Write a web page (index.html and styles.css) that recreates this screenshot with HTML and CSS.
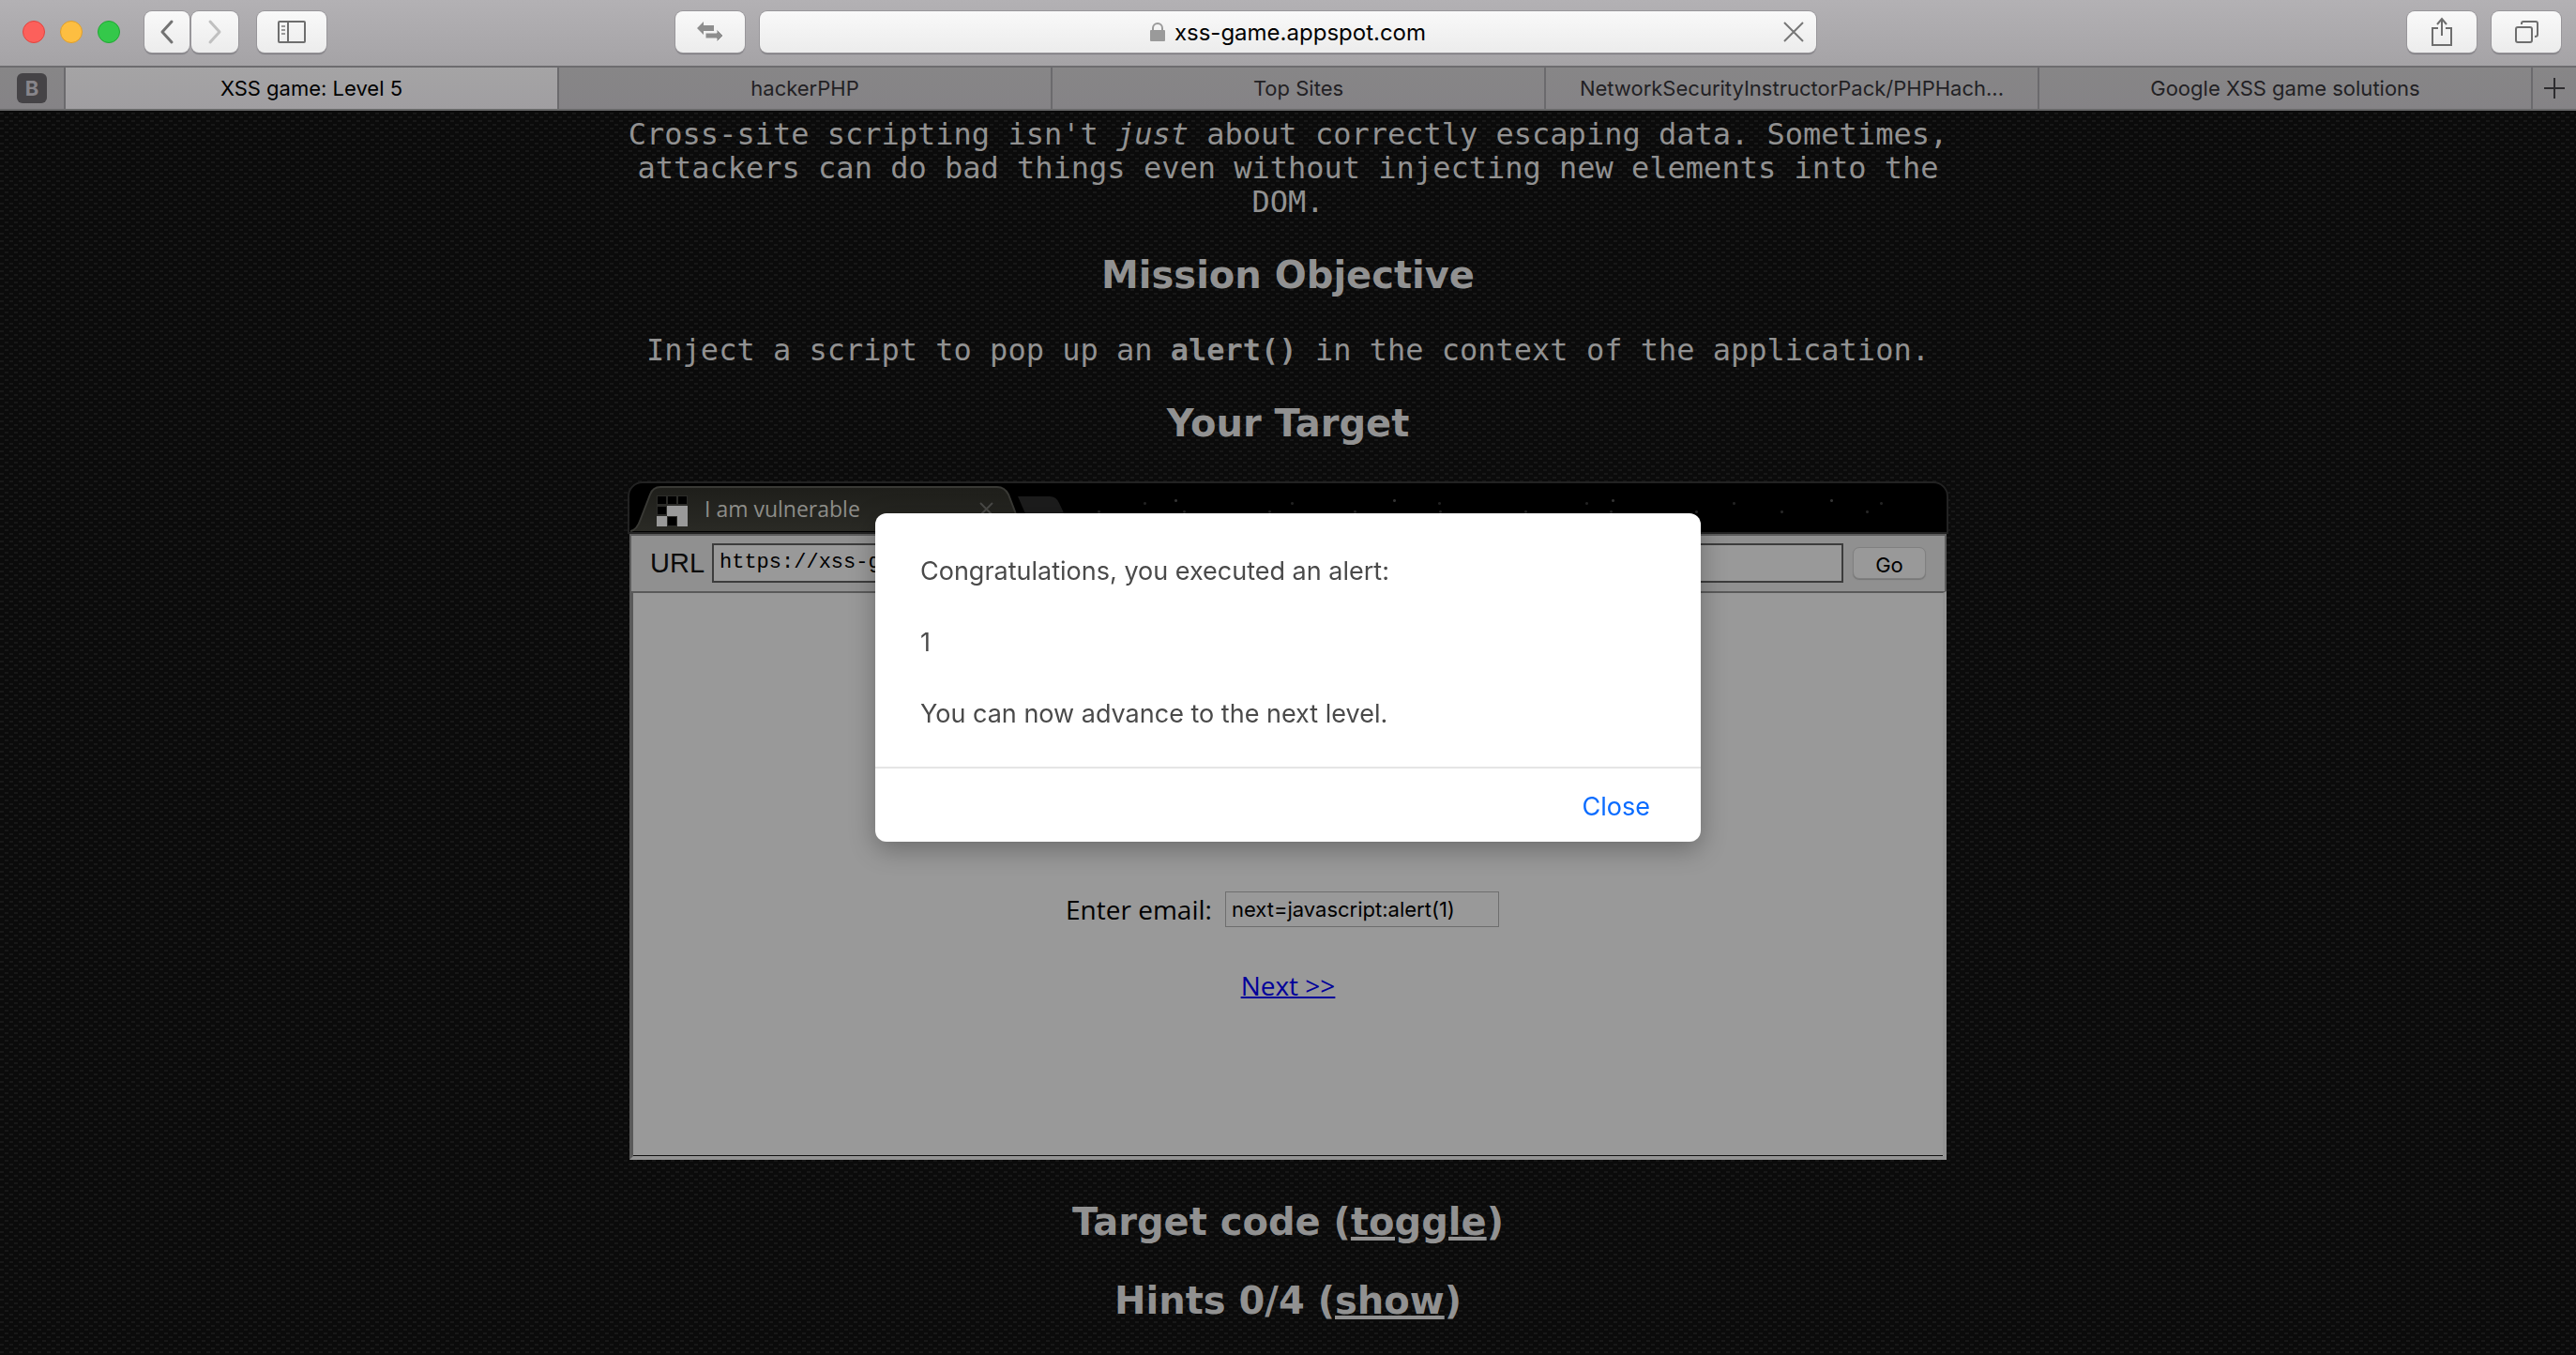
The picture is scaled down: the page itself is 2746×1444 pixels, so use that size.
FILE: index.html
```html
<!DOCTYPE html>
<html lang="en">
<head>
<meta charset="utf-8">
<title>XSS game: Level 5</title>
<link rel="stylesheet" href="styles.css">
</head>
<body>
<header class="browser">
  <div class="toolbar">
    <div class="tools">
      <div class="lights"><span class="light red"></span><span class="light amber"></span><span class="light green"></span></div>
      <div class="history">
        <button class="tool back" aria-label="Back"><svg width="16" height="28" viewBox="0 0 16 28"><path d="M13 3 3 14l10 11" fill="none" stroke="#737373" stroke-width="3" stroke-linecap="round" stroke-linejoin="round"/></svg></button>
        <button class="tool forward" aria-label="Forward"><svg width="16" height="28" viewBox="0 0 16 28"><path d="M3 3l10 11L3 25" fill="none" stroke="#c0c0c0" stroke-width="3" stroke-linecap="round" stroke-linejoin="round"/></svg></button>
      </div>
      <button class="tool wide" aria-label="Sidebar"><svg width="30" height="24" viewBox="0 0 30 24" fill="none" stroke="#6e6e6e" stroke-width="2"><rect x="1" y="1" width="28" height="22" rx="1"/><path d="M11 1v22"/><path d="M4 6h4M4 10h4M4 14h4" stroke="#999"/></svg></button>
      <button class="tool wide swap" aria-label="Redirect"><svg width="28" height="24" viewBox="0 0 28 24" fill="#8e8e8e"><path d="M0 8 7 1v4h11v6H7v4z"/><path d="M28 16l-7-7v4H9v6h12v4z" stroke="#f2f2f2" stroke-width="1"/></svg></button>
    </div>
    <div class="address">
      <svg width="16" height="20" viewBox="0 0 16 20"><path d="M3 9V6a5 5 0 0 1 10 0v3" fill="none" stroke="#9a9a9a" stroke-width="2"/><rect y="8" width="16" height="12" rx="1" fill="#9a9a9a"/></svg>
      <span>xss-game.appspot.com</span>
      <button class="stop" aria-label="Stop loading"><svg width="24" height="24" viewBox="0 0 24 24"><path d="M2 2l20 20M22 2 2 22" stroke="#777" stroke-width="2"/></svg></button>
    </div>
    <div class="tools tools-end">
      <button class="tool wide" aria-label="Share"><svg width="24" height="32" viewBox="0 0 24 32" fill="none" stroke="#6e6e6e" stroke-width="2"><path d="M8 12H2v18h20V12h-6"/><path d="M12 20V2M7 8l5-6 5 6"/></svg></button>
      <button class="tool wide" aria-label="Show all tabs"><svg width="26" height="26" viewBox="0 0 26 26" fill="none" stroke="#6e6e6e" stroke-width="2"><rect x="2" y="8" width="17" height="16" rx="2"/><path d="M8 5V4q0-2 2-2h13q2 0 2 2v12q0 2-3 2"/></svg></button>
    </div>
  </div>
  <nav class="tabs">
    <a class="pinned" href="#pinned"><span class="badge">B</span></a>
    <a class="tab active" href="#level5">XSS game: Level 5</a>
    <a class="tab" href="#hacker">hackerPHP</a>
    <a class="tab" href="#top">Top Sites</a>
    <a class="tab" href="#pack">NetworkSecurityInstructorPack/PHPHach...</a>
    <a class="tab" href="#solutions">Google XSS game solutions</a>
    <button class="new-tab" aria-label="New tab"><svg width="22" height="22" viewBox="0 0 22 22"><path d="M11 0v22M0 11h22" stroke="#2d2c2f" stroke-width="2"/></svg></button>
  </nav>
</header>

<main class="page">
  <p class="intro">Cross-site scripting isn't <em>just</em> about correctly escaping data. Sometimes, attackers can do bad things even without injecting new elements into the DOM.</p>
  <h2>Mission Objective</h2>
  <p class="objective">Inject a script to pop up an <b>alert()</b> in the context of the application.</p>
  <h2>Your Target</h2>

  <section class="frame">
    <div class="titlebar">
      <svg class="tab-shape" width="464" height="52" viewBox="0 0 464 52">
        <defs><linearGradient id="tab" x1="0" y1="0" x2="0" y2="1"><stop offset="0" stop-color="#1e1e1a"/><stop offset="1" stop-color="#2a2a25"/></linearGradient></defs>
        <path d="M1 51Q8 50 12 38L22 12Q25 4 33 4H392Q400 4 404 12L414 38Q419 50 424 51Z" fill="url(#tab)"/>
        <path d="M1 51Q8 50 12 38L22 12Q25 4 33 4H392Q400 4 404 12L414 38" fill="none" stroke="#393935" stroke-width="2"/>
        <path d="M414 14h34q7 0 10 7l7 15q2 6 5 7h-37q-7 0-9-6z" fill="#1c1c1c"/>
        <path d="M374 21l13 13M387 21l-13 13" stroke="#4a4a47" stroke-width="2"/>
        <rect x="29" y="13" width="33" height="33" fill="#2c2c29"/>
        <path d="M30 14h9v8h-9zM41 14h9v8h-9zM52 14h9v8h-9zM30 25h9v8h-9zM41 36h9v9h-9z" fill="#000"/>
        <rect x="40" y="24" width="11" height="11" fill="#999"/>
        <rect x="51" y="24" width="11" height="22" fill="#999"/>
        <rect x="29" y="35" width="11" height="11" fill="#999"/>
      </svg>
      <span class="tab-name">I am vulnerable</span>
    </div>
    <form class="urlbar">
      <label for="url">URL</label>
      <input id="url" type="text" value="https://xss-game.appspot.com/level5/frame/signup?next=javascript:alert(1)">
      <button type="button">Go</button>
    </form>
    <div class="viewport">
      <form class="signup">
        <label for="email">Enter email:</label>
        <input id="email" type="text" value="next=javascript:alert(1)">
      </form>
      <a class="next" href="#next">Next &gt;&gt;</a>
    </div>
  </section>

  <h2>Target code (<a href="#code">toggle</a>)</h2>
  <h2>Hints 0/4 (<a href="#hints">show</a>)</h2>
</main>

<div class="overlay">
  <div class="dialog" role="dialog" aria-label="Alert">
    <div class="message">
      <p>Congratulations, you executed an alert:</p>
      <p>1</p>
      <p>You can now advance to the next level.</p>
    </div>
    <div class="actions"><button type="button">Close</button></div>
  </div>
</div>
</body>
</html>
```
FILE: styles.css
```css
* { box-sizing: border-box; }

body {
  margin: 0;
  background-color: #0b0b0b;
  background-image:
    conic-gradient(from 270deg at 4px 2px, #181818 90deg, transparent 0),
    conic-gradient(from 270deg at 4px 2px, #181818 90deg, transparent 0);
  background-size: 10px 8px;
  background-position: 0 0, 5px 4px;
  color: #919191;
  font-family: "DejaVu Sans Mono", monospace;
}

button, input { font: inherit; margin: 0; }
a { color: inherit; }

/* Browser chrome */
.browser {
  font-family: Inter, sans-serif;
}

.toolbar {
  display: grid;
  grid-template-columns: 1fr 41% 1fr;
  gap: 16px;
  align-items: center;
  height: 72px;
  padding-bottom: 2px;
  background: linear-gradient(#b3b1b4, #a5a3a6);
  border-bottom: 2px solid #6d6c6f;
}

.tools {
  display: flex;
  align-items: center;
  gap: 20px;
  padding-left: 24px;
}

.tools-end {
  justify-content: flex-end;
  gap: 16px;
  padding: 0 16px 0 0;
}

.lights {
  display: flex;
  gap: 16px;
  margin-right: 6px;
}

.light {
  width: 24px;
  height: 24px;
  border: 1px solid #e2443f;
  border-radius: 50%;
  background: #fc605b;
}

.amber { background: #fdbe41; border-color: #df9e2c; }
.green { background: #34c84a; border-color: #20a832; }

.history { display: flex; gap: 2px; }

.tool {
  display: flex;
  align-items: center;
  justify-content: center;
  width: 50px;
  height: 44px;
  padding: 0;
  border: 0;
  border-radius: 8px;
  background: linear-gradient(#f9f9f9, #ececec);
  box-shadow: 0 0 0 1px #98969a, 0 2px 1px #7e7c80;
}

.back { width: 48px; }
.wide { width: 74px; }
.swap { margin-left: auto; }

.address {
  position: relative;
  display: flex;
  align-items: center;
  justify-content: center;
  gap: 10px;
  height: 44px;
  border-radius: 8px;
  background: linear-gradient(#f9f9f9, #ececec);
  box-shadow: 0 0 0 1px #98969a, 0 2px 1px #7e7c80;
  color: #000;
  font-size: 24px;
}

.stop {
  position: absolute;
  right: 12px;
  display: flex;
  padding: 0;
  border: 0;
  background: none;
}

.tabs {
  display: flex;
  height: 46px;
  border-bottom: 2px solid #69696a;
  background: linear-gradient(#878687, #858386);
  color: #222124;
  font-size: 22px;
}

.tabs a {
  display: flex;
  align-items: center;
  justify-content: center;
  border-right: 2px solid #6b6a6d;
  text-decoration: none;
}

.pinned { width: 70px; }

.badge {
  width: 32px;
  border-radius: 6px;
  background: #454346;
  color: #87858a;
  font-weight: 700;
  line-height: 32px;
  text-align: center;
}

.tab { flex: 1; }

.active {
  background: linear-gradient(#a5a4a5, #a09ea1);
  color: #000;
}

.new-tab {
  display: flex;
  align-items: center;
  justify-content: center;
  width: 46px;
  padding: 0;
  border: 0;
  background: none;
}

/* Game page */
.page {
  max-width: 1408px;
  margin: 0 auto;
  padding-top: 7px;
  font-size: 32px;
  line-height: 36px;
  text-align: center;
}

.page p { margin: 0; }

h2 {
  margin: 38px 0 40px;
  font-family: "DejaVu Sans", sans-serif;
  font-size: 40px;
  line-height: 44px;
}

.frame {
  margin-bottom: 44px;
  color: #0a0a0a;
  font-family: "Liberation Sans", sans-serif;
}

.titlebar {
  display: flex;
  align-items: center;
  height: 56px;
  border: 2px solid #222;
  border-radius: 16px 16px 0 0;
  background-color: #000;
  background-image:
    radial-gradient(circle, #333 1px, transparent 2px),
    radial-gradient(circle, #222 1px, transparent 2px),
    radial-gradient(circle, #262626 1px, transparent 2px);
  background-size: 233px 37px, 157px 43px, 91px 61px;
}

.tab-shape { flex: none; }

.tab-name {
  margin-left: -384px;
  padding-top: 2px;
  color: #8d8d89;
  font-family: "Open Sans", sans-serif;
  font-size: 23px;
}

.urlbar {
  display: flex;
  align-items: center;
  gap: 8px;
  margin: 0 2px;
  height: 61px;
  padding: 0 20px 2px;
  border: solid #5c5c5c;
  border-width: 2px 2px 0;
  background: #909090;
  font-size: 29px;
}

.urlbar input {
  flex: 1;
  height: 42px;
  padding: 0 6px;
  border: 2px solid #3c3c3c;
  background: #999;
  color: #000;
  font-family: "Liberation Mono", monospace;
  font-size: 22px;
}

.urlbar button {
  width: 78px;
  height: 34px;
  margin-left: 2px;
  padding: 0;
  border: 1px solid #808080;
  border-radius: 7px;
  background: #999;
  box-shadow: 0 1px 1px #777;
  color: #000;
  font-family: Inter, sans-serif;
  font-size: 22px;
}

.viewport {
  display: flex;
  flex-direction: column;
  align-items: center;
  gap: 44px;
  min-height: 606px;
  margin: 0 2px;
  padding-top: 318px;
  border: 4px solid;
  border-color: #5a5a5a #939393 #939393 #5a5a5a;
  border-top-width: 2px;
  background: #999;
  box-shadow: inset 0 -1px #111;
  color: #000;
  font-family: "Open Sans", sans-serif;
  font-size: 28px;
}

.signup {
  display: flex;
  align-items: center;
  gap: 14px;
  margin-right: 12px;
}

.signup input {
  width: 292px;
  height: 38px;
  padding: 0 6px;
  border: 1px solid #6e6e6e;
  background: #999;
  color: #000;
  font-family: Inter, sans-serif;
  font-size: 22px;
}

.next { color: #00009a; text-decoration-thickness: 2px; }

/* Alert dialog */
.overlay {
  position: fixed;
  inset: 0;
  display: flex;
  align-items: center;
  justify-content: center;
}

.dialog {
  width: 880px;
  border-radius: 12px;
  background: #fff;
  box-shadow: 0 8px 28px rgba(0, 0, 0, 0.3);
  color: #4a4a4a;
  font-family: Inter, sans-serif;
  font-size: 27px;
  line-height: 38px;
}

.message { padding: 43px 48px 37px; }
.message p { margin: 0 0 38px; }
.message p:last-child { margin: 0; }

.actions {
  display: flex;
  justify-content: flex-end;
  padding: 22px 48px 18px;
  border-top: 2px solid #e5e5e5;
}

.actions button {
  padding: 0 6px;
  border: 0;
  background: none;
  color: #0b6cff;
}
```
